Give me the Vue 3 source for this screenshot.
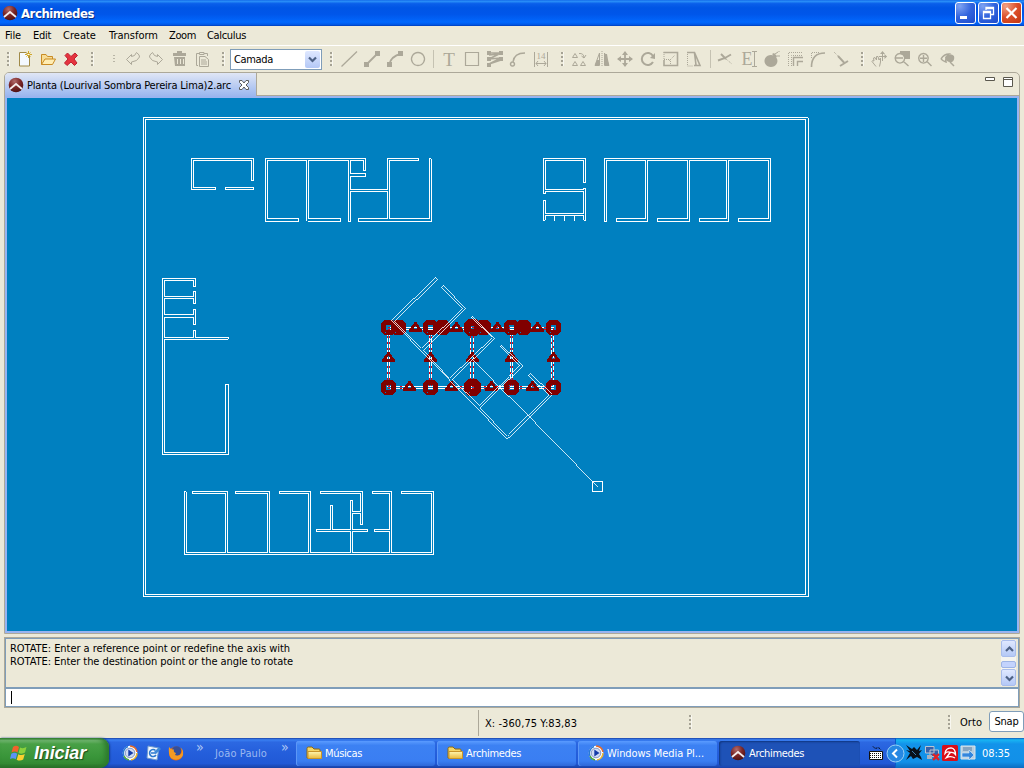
<script setup>
// Spreads or tightens the tracking of a label so that it fills the given width.
const vFit = {
  mounted(el, { value }) {
    const natural = el.getBoundingClientRect().width
    el.style.letterSpacing = (value - natural) / el.textContent.length + 'px'
  }
}

const menus = [
  ['File', 16, 5], ['Edit', 18, 12], ['Create', 33, 12],
  ['Transform', 49, 13], ['Zoom', 27, 11], ['Calculus', 39, 11]
]

const edit = [
  { s: 'M1.500 8.500L6.500 3.500V5.500Q10 5.500 11.500 1.500Q15 4 14.500 6Q12.500 10.500 6.500 11V13.500Z' },
  { s: 'M14.500 8.500L9.500 3.500V5.500Q6 5.500 4.500 1.500Q1 4 1.500 6Q3.500 10.500 9.500 11V13.500Z' },
  { f: 'M2 2H6V0H11V2H15V5H2ZM3 6H14V15H4ZM6 8V13H7V8ZM9 8V13H10V8ZM12 8V13H13V8Z' },
  { s: 'M4 14.5H2.5V2.5H5M10 2.5H13.5V5M5.5 3.5V1.5H10V3.5ZM5.5 5.5H11L14.5 8.5V15.5H5.5ZM7 9H12M7 11H13M7 13H13' }
]
const draw = [
  { s: 'M.5 15.500L16 .5', w: 1.3 },
  { s: 'M2 14L14 2', w: 1.8, f: 'M0 11H5V16H0ZM11 0H16V5H11Z' },
  { s: 'M2 14Q4 5 14 3', w: 1.8, f: 'M0 11H5V16H0ZM11 0H16V5H11Z' },
  { s: 'M8 1.500A6.500 6.500 0 1 1 7.990 1.500Z', w: 1.3 }
]
const shapes = [
  { t: 'T', fs: 19, y: 14.5 },
  { s: 'M1.500 1.500H14.500V14.500H1.500Z', w: 1.2 },
  { s: 'M2 2H14L2 8L14 7L2 13L14 9M2 4L13 3', w: 1.6, f: 'M0 0H4V4H0ZM12 0H16V4H12ZM0 6H4V10H0ZM12 6H16V10H12ZM0 12H4V16H0Z' },
  { s: 'M3 11Q4 2 15 2M2.500 11A2 2 0 1 1 2.490 11Z', w: 1.5 },
  { s: 'M1.5 1V16M14.5 1V16M3 12.500H13M5 10L3 12.500L5 15M11 10L13 12.500L11 15', t: '14', fs: 9, y: 8 }
]
const transform = [
  { s: 'M4 2.500L1.500 6.500H6.500ZM4 10.500L1.500 14.500H6.500ZM12 10.500L9.500 14.500H14.500ZM8 2.500Q13 2 13 7M10.500 5L13 7L15 4' },
  { d: 'M8 0V16', s: 'M5.500 2L1 14.500H5.500ZM10.500 2L15 14.500H10.500Z', f: 'M3 9H5V14H1ZM11 3H13L15 14H11Z' },
  { s: 'M8 1V15M1 8H15', w: 1.8, f: 'M8 0L11 4H5ZM8 16L11 12H5ZM0 8L4 5V11ZM16 8L12 5V11Z' },
  { s: 'M13 11A6 6 0 1 1 13 5', w: 2, f: 'M15 2V8L10 7Z' },
  { d: 'M1 8V1M1 8.500H7.500V15M6 10L12 4', s: 'M.5 1.500H14.500V14.500H1V9', w: 1.6 },
  { d: 'M1.500 1V15H7', s: 'M1 1.500H8.500L14 14.500H8M8.500 2L10 14', w: 1.6 }
]
const modify = [
  { s: 'M0 9.500L7 7L13 3.500M3 3L8 8', w: 1.9, d: 'M8 8L14 13' },
  { t: 'E', fs: 18, y: 13.5, x: 6, s: 'M13.500 1V15M11 .5H16M11 15.500H16' },
  { f: 'M7 4A6.500 6 0 1 1 6.900 4ZM8 3L10 2L13 5L12 7Z', s: 'M11 3L14 1M15 0V1M13 5L16 5' },
  { d: 'M1.500 15V1.500H16M4.500 15V4.500H16', s: 'M6.500 15V6.500H16M10.500 15V10.500H16', w: 1.4 },
  { d: 'M1.500 7V1.500H9', s: 'M1.500 16Q1.500 2 15 2', w: 1.6 },
  { d: 'M1 1L7 7', s: 'M5 5L11 11.500M7 15L15 10', w: 1.9 }
]
const view = [
  { s: 'M5 15.500L1 10.500Q1 9 3 10L2.500 7L4 6.500L5.500 9L5.500 5.500H7L8 9L9.500 7V11L8.500 15.500M11.500 1V10M8 5.500H15.500', f: 'M11.500 0L14 3H9ZM16 5.500L13.500 8V3Z' },
  { s: 'M6 2.500A4.800 4.800 0 1 1 5.900 2.500ZM9.500 10.500L14.500 15M2 7H9', w: 1.4, f: 'M6 0H16V8H11L9 4L6 3Z' },
  { s: 'M6.500 2.500A4.800 4.800 0 1 1 6.400 2.500ZM10 10.500L14.500 15M3 7.300H10M6.500 4V11', w: 1.4 },
  { s: 'M1 8Q4 3 9 3Q5 6 6 11Q3 10 1 8M10 11L14 15', w: 1.5, f: 'M5 6Q10 1 14 5Q15 9 12 11Q6 12 5 6Z' }
]

const walls = [
  // site boundary
  'M143 117H807M808 118V596H143V117M145 119H805V594H145Z',
  // north-west blocks
  'M251 180V160H193V187H215V189H191V158H253V180H251M253 189H225V187H253V189',
  'M306 220V160H267V218H298V221H265V158H365V170H363V160H350V173H365V176H350V189H387V158H418V160H389V218H429V158H430M431 159V221H358V218H387V191H350V221H348V160H308V218H340V221H308',
  // north-east blocks
  'M583 182H585V158H543V193H545V191H583V213H545V200H543V220H544M583 182V160H545V189H583V188H585V220H584M545 219V215H583V219M554 215V220M564 215V220M574 215V220',
  'M604 158H770V221H738V218H768V160H728V221H699V218H726V160H689V221H657V218H687V160H647V221H616V218H645V160H606V221H604Z',
  // west block
  'M195 285V278H162V454H228V384H225V452H164V339H227M228 338V337H195V330H193V337H164V317H193V324H195V309H193V314H164V298H193V303H195V291H193V296H164V280H193V286H195',
  // south block
  'M185 491H184V554H433V491H401V493H431V552H391V491H372V493H389V529H374V531H389V552H352V531H367V529H352V513H360V524H362V491H320V493H360V511H352V500H350V529H332V505H330V529H316V531H350V552H310V491H279V493H308V552H269V491H235V493H267V552H227V491H192V493H225V552H186V492'
]
// floor plan preview at the current rotation angle
const ghost = 'M435 276L391 319L507 438L551 394L529 373L527 375L548 395L507 435L480 407L522 365L501 344L499 346L519 365L478 405L451 379L494 337L472 315L470 317L491 337L449 377L423 349L465 307L443 284L441 286L462 307L421 347L394 320L437 278Z'
const columns = 'M387 329V386M389 329V386M429 329V386M431 329V386M470 329V386M473 329V386M510 329V386M512 329V386M551 329V386M553 327V386'
const rows = 'M387 327H553M387 329H553M387 386H553M387 388H553'

const full = new Set([398, 442, 483, 523])
const grips = []
for (const x of [388, 398, 430, 442, 472, 483, 511, 523, 553]) grips.push([x, 327])
for (const x of [388, 430, 472, 511, 553]) grips.push([x, 387])
const mids = []
for (const x of [415, 456, 497, 537]) mids.push([x, 327])
for (const x of [388, 430, 472, 511, 553]) mids.push([x, 357])
for (const x of [409, 451, 491, 532]) mids.push([x, 386])

const tasks = [
  { label: 'Músicas', w: 37, icon: 'folder' },
  { label: 'Archimedes', w: 55, icon: 'folder' },
  { label: 'Windows Media Pl...', w: 97, icon: 'wmp' },
  { label: 'Archimedes', w: 55, icon: 'arch', on: true }
]
</script>

<template>
  <div class="screen">
    <svg class="defs" width="0" height="0">
      <defs>
        <radialGradient id="red" cx=".4" cy=".25" r=".8"><stop offset="0" stop-color="#b06a6a" /><stop offset=".5" stop-color="#7c2727" /><stop offset="1" stop-color="#4a0f10" /></radialGradient>
        <linearGradient id="fold" x2="0" y2="1"><stop offset="0" stop-color="#fff6b0" /><stop offset="1" stop-color="#e9b93c" /></linearGradient>
        <symbol id="arch" viewBox="0 0 16 16"><circle cx="8" cy="8" r="7.300" fill="url(#red)" /><path d="M2 12L8 7L14 12" fill="none" stroke="#f4ecec" stroke-width="1.800" /></symbol>
        <symbol id="folder" viewBox="0 0 16 16"><path d="M1 3.500Q1 2 2.500 2H6L8 4H13Q14 4 14 5V13H1Z" fill="#f5d667" stroke="#8a6914" /><path d="M2 6.500H15.500V13.500H2Z" fill="url(#fold)" stroke="#c9952a" /></symbol>
        <symbol id="wmp" viewBox="0 0 16 16"><circle cx="8" cy="8" r="7.300" fill="#fff" /><path d="M2 11A7 7 0 0 1 6 1.500" fill="none" stroke="#2779d6" stroke-width="1.500" /><path d="M8 1A7 7 0 0 1 15 7" fill="none" stroke="#e66a27" stroke-width="1.500" /><path d="M15 8A7 7 0 0 1 9 15" fill="none" stroke="#e9b32b" stroke-width="1.500" /><path d="M7 15A7 7 0 0 1 2 11" fill="none" stroke="#4da841" stroke-width="1.500" /><circle cx="8" cy="8" r="4.800" fill="#cfdcf5" stroke="#8496c4" /><path d="M6.300 4.500L11.500 8L6.300 11.500Z" fill="#143ba8" /></symbol>
      </defs>
    </svg>

    <header class="title">
      <svg class="i16"><use href="#arch" /></svg>
      <b v-fit="73">Archimedes</b>
      <div class="winbtns">
        <svg width="21" height="22"><path d="M5 15.500H12" stroke="#fff" stroke-width="3" /></svg>
        <svg width="21" height="22"><path d="M8 8V5.500H15.500V12.500H13M8 6.500H15.500M5.500 9.500H12.500V16.500H5.500ZM5.500 10.500H12.500" fill="none" stroke="#fff" stroke-width="1.300" /></svg>
        <svg class="close" width="21" height="22"><path d="M5.500 6L15.500 16M15.500 6L5.500 16" stroke="#fff" stroke-width="2.200" /></svg>
      </div>
    </header>

    <nav class="menu">
      <span v-for="m in menus" :key="m[0]" :style="{ marginLeft: m[2] + 'px' }" v-fit="m[1]">{{ m[0] }}</span>
    </nav>

    <div class="tools">
      <i class="grip g0" />
      <div class="group m7">
        <svg class="i16" viewBox="0 0 16 16"><path d="M2.500 1.500H9L12.500 5V15H2.500Z" fill="#f4f9ff" stroke="#a08a48" /><path d="M11.500 0V7M8 3.500H15M9.500 1.500L13.500 5.500M13.500 1.500L9.500 5.500" stroke="#d0a72a" /><path d="M10.500 3.500H12.500" stroke="#fff" /></svg>
        <svg class="i16" viewBox="0 0 16 16"><path d="M1.500 13.500V3.500H6L7.500 5.500H12.500V8" fill="#f7dc95" stroke="#c98b23" /><path d="M1.500 13.500L5 8H15.500L12.500 13.500Z" fill="#ffedb3" stroke="#c98b23" /></svg>
        <svg class="i16" viewBox="0 0 16 16"><path d="M4.500 2L8 5.500L12 2L14.500 4.500L11 8L14 12L11.500 14.500L8 11L4 14.500L1.500 12L5 8L2 4.500Z" fill="#e5343f" stroke="#bd2332" /></svg>
      </div>
      <i class="grip m12" />
      <i class="dots" />
      <div class="group m8">
        <svg v-for="(k, n) in edit" :key="n" class="i16 dis" viewBox="0 0 16 16"><path v-if="k.s" :d="k.s" class="ln" /><path v-if="k.f" :d="k.f" class="fl" /></svg>
      </div>
      <i class="grip m12" />
      <div class="combo"><span v-fit="39">Camada</span><svg width="15" height="17"><path d="M4 6.500L7.500 10L11 6.500" fill="none" stroke="#4d6185" stroke-width="2.200" /></svg></div>
      <i class="grip m8" />
      <template v-for="(g, gi) in [draw, shapes, transform, modify, view]" :key="gi">
        <i v-if="gi === 1 || gi === 3" class="sep" :class="{ wide: gi === 3 }" />
        <i v-if="gi === 2 || gi === 4" class="grip m12" />
        <div class="group" :class="gi === 0 ? 'm8' : 'm7'">
          <svg v-for="(k, n) in g" :key="n" class="i16 dis" viewBox="0 0 16 16">
            <path v-if="k.f" :d="k.f" class="fl" />
            <path v-if="k.d" :d="k.d" class="ln dash" />
            <path v-if="k.s" :d="k.s" class="ln" :stroke-width="k.w || 1" />
            <text v-if="k.t" :x="k.x || 8" :y="k.y" :font-size="k.fs" text-anchor="middle">{{ k.t }}</text>
          </svg>
        </div>
      </template>
    </div>

    <section class="editor">
      <div class="tabs">
        <div class="tab">
          <svg class="i16"><use href="#arch" /></svg>
          <span v-fit="204">Planta (Lourival Sombra Pereira Lima)2.arc</span>
          <svg width="12" height="12" viewBox="0 0 12 12"><path d="M1.500 1.500H4L6 4L8 1.500H10.500V3.500L8 6L10.500 8.500V10.500H8L6 8L4 10.500H1.500V8.500L4 6L1.500 3.500Z" fill="#fff" stroke="#5c5c5c" /></svg>
        </div>
        <div class="tabctl">
          <svg width="10" height="5"><path d="M.5 .5H9.500V3.500H.5Z" fill="#fff" stroke="#5a584e" /></svg>
          <svg width="10" height="10"><path d="M.5 .5H9.500V9.500H.5ZM.5 2.500H9.500" fill="#fff" stroke="#5a584e" /></svg>
        </div>
      </div>
      <svg class="canvas" viewBox="7 98 1010 533">
        <g transform="translate(.5 .5)" shape-rendering="crispEdges" fill="none" stroke="#fff" stroke-linecap="square">
          <path v-for="(d, n) in walls" :key="n" :d="d" />
          <g class="sel"><path :d="columns" /><path :d="rows" /></g>
          <path class="selred" :d="columns" />
          <path class="selred far" :d="rows" />
          <path v-for="(p, n) in grips" :key="'g' + n" class="mark" :class="{ full: full.has(p[0]) }" :stroke-width="p[0] === 472 ? 7 : 5" :transform="`translate(${p[0]} ${p[1]})`" d="M-3 -5H3L5 -3V3L3 5H-3L-5 3V-3Z" />
          <path v-for="(p, n) in mids" :key="'m' + n" class="mark" stroke-width="3" stroke-linejoin="round" :transform="`translate(${p[0]} ${p[1]})`" d="M0 -4L-5 3H5Z" />
          <path class="thin" :d="ghost" />
          <path class="thin" d="M472 358L597 486" />
          <path d="M592 481H602V491H592Z" />
        </g>
      </svg>
    </section>

    <section class="console">
      <div class="log">
        <div>
          <p><span v-fit="280">ROTATE: Enter a reference point or redefine the axis with</span></p>
          <p><span v-fit="283">ROTATE: Enter the destination point or the angle to rotate</span></p>
        </div>
        <div class="scroll">
          <svg class="sb" width="15" height="17"><path d="M4 10L7.500 6.500L11 10" fill="none" stroke="#4d6185" stroke-width="2.200" /></svg>
          <i class="thumb" />
          <svg class="sb" width="15" height="17"><path d="M4 6.500L7.500 10L11 6.500" fill="none" stroke="#4d6185" stroke-width="2.200" /></svg>
        </div>
      </div>
      <div class="input"><i /></div>
    </section>

    <footer class="status">
      <i class="rule" />
      <span class="coords" v-fit="92">X: -360,75 Y:83,83</span>
      <i class="grip s1" />
      <i class="grip s2" />
      <span class="orto" v-fit="22">Orto</span>
      <div class="snap"><span v-fit="24">Snap</span></div>
    </footer>

    <div class="taskbar">
      <div class="start">
        <svg width="18" height="18" viewBox="0 0 18 18"><path d="M3 3Q6 .5 9 3L7.500 8.500Q5 6.500 1.500 8.500Z" fill="#f2622c" /><path d="M10 3.500Q13 5 16.500 3L15 8.500Q12 10.500 8.500 9Z" fill="#8bd13c" /><path d="M1.300 9.800Q4.500 7.500 7.200 9.800L5.700 15.200Q3 13.200 0 15Z" fill="#5a93f5" /><path d="M8.300 10.200Q11.500 12 14.800 10L13.200 15.500Q10 17.500 6.700 15.700Z" fill="#fbd02f" /></svg>
        <b v-fit="52">Iniciar</b>
      </div>
      <div class="quick">
        <svg class="i16"><use href="#wmp" /></svg>
        <svg class="i16" viewBox="0 0 16 16"><path d="M3 1L14 3L12 15L2 13Z" fill="#f2f7fd" stroke="#6e9bd0" /><path d="M10.500 5.500A3.500 3.500 0 1 0 11 10M6 8H11" fill="none" stroke="#2b79cf" stroke-width="1.600" /><path d="M9 7L14 2L16 4L11 9Z" fill="#408ad8" /></svg>
        <svg class="i16" viewBox="0 0 16 16"><circle cx="8" cy="8.500" r="7" fill="#e46a16" /><circle cx="8.500" cy="6" r="4.800" fill="#344f9b" /><path d="M1 2Q3 5 6 4.500Q5 7 8 8L7 10Q10 12 13 9Q15 6 12.500 2Q17 7 14 12Q9 17 3 13Q0 9 1 2Z" fill="#f49a22" /></svg>
      </div>
      <span class="chev">»</span>
      <span class="user" v-fit="52">João Paulo</span>
      <span class="chev c2">»</span>
      <div class="tasks">
        <div v-for="(t, n) in tasks" :key="n" class="task" :class="{ on: t.on }">
          <svg class="i16"><use :href="'#' + t.icon" /></svg>
          <span v-fit="t.w">{{ t.label }}</span>
        </div>
      </div>
      <svg class="kbd" width="14" height="14" viewBox="0 0 14 14"><path d="M4 .5Q6 3 8 2T12 4" fill="none" stroke="#000" stroke-dasharray="2 1" /><path d="M.5 5.500H13.500V13.500H.5Z" fill="#fff" stroke="#111" /><path d="M1 7.500H13M1 9.500H13M1 11.500H13" stroke="#111" stroke-dasharray="1 1" /></svg>
      <div class="tray">
        <svg class="collapse" width="19" height="19" viewBox="0 0 19 19"><circle cx="9.500" cy="9.500" r="8.500" fill="#2788e3" stroke="#9bd1f5" /><path d="M11 5.500L7 9.500L11 13.500" fill="none" stroke="#fff" stroke-width="2" /></svg>
        <svg class="i16" viewBox="0 0 16 16"><path d="M0 0L6 4L8 2L11 5L15 0L13 6L16 5L13 9L15 12L16 15L11 12L7 14L5 11L0 15L4 8L0 5L4 6Z" fill="#091019" /><path d="M6 6L10 10" stroke="#397cae" /></svg>
        <svg class="i16" viewBox="0 0 16 16"><path d="M1.500 1.500H10V8H1.500ZM6 5H14.500V11.500H6Z" fill="#3861a9" stroke="#bbc4cf" /><path d="M3 10H8V14H3Z" fill="#a9b2c0" /><path d="M9 9L15 15M15 9L9 15" stroke="#e32124" stroke-width="2.400" /></svg>
        <svg class="i16" viewBox="0 0 16 16"><rect width="16" height="16" rx="1.500" fill="#d90f18" /><path d="M3 8.500Q3.500 3 9 2.800Q13.500 3.500 13.500 9.500Q11.500 6.800 8.500 7.500Q5 6 3 8.500Z" fill="none" stroke="#fff" stroke-width="1.300" /><path d="M8.500 7L4.500 12.500Q9 10.500 13 13" fill="none" stroke="#fff" stroke-width="1.400" /></svg>
        <svg class="i16" viewBox="0 0 16 16"><path d="M1 1H15V14H1Z" fill="#b7cddd" stroke="#d8e4ec" /><path d="M3 3H12M3 5H12" stroke="#547da4" /><path d="M2 8H9V5L14 10L9 15V12H2Z" fill="#3486dc" stroke="#d8efff" stroke-width=".6" /></svg>
        <span class="clock" v-fit="28">08:35</span>
      </div>
    </div>
  </div>
</template>

<style>
body { margin: 0; overflow: hidden; }
</style>

<style scoped>
.screen { width: 1024px; height: 768px; display: flex; flex-direction: column; background: #ece9d8; font: 11px/13px "DejaVu Sans Condensed", "DejaVu Sans", sans-serif; color: #000; overflow: hidden; }
.screen * { box-sizing: border-box; flex-shrink: 0; }
.screen span, .screen b { white-space: pre; display: inline-block; }
.defs { position: absolute; }
.i16 { width: 16px; height: 16px; display: block; overflow: visible; }
.title { height: 26px; display: flex; align-items: center; padding: 0 2px; background: linear-gradient(#1268e8 0, #2a8ff8 5%, #0a5fea 14%, #0055e5 30%, #0056ea 55%, #0168fe 85%, #0059e8 94%, #003dbb); }
.title b { color: #fff; font-size: 13px; line-height: 16px; margin: 1px 0 0 3px; text-shadow: 1px 1px #0b2f86; }
.winbtns { margin-left: auto; display: flex; gap: 2px; }
.winbtns svg { border: 1px solid #fff; border-radius: 3px; background: radial-gradient(circle at 20% 15%, #7fa3f2, #3264de 50%, #1d4bcb); }
.winbtns svg path { transform: translate(-1px, -1px); }
.winbtns .close { background: radial-gradient(circle at 20% 15%, #f0a286, #dc4f2a 50%, #c03510); }
.menu { height: 20px; display: flex; align-items: center; border-bottom: 1px solid #fff; padding-bottom: 1px; }
.tools { height: 26px; display: flex; align-items: center; }
.grip { width: 3px; height: 14px; background: repeating-linear-gradient(#a5a294 0 2px, transparent 2px 4px); border-right: 1px solid #f8f7f0; }
.g0 { margin-left: 7px; }
.m7 { margin-left: 7px; }
.m8 { margin-left: 8px; }
.m12 { margin-left: 12px; }
.group { display: flex; gap: 7px; }
.dots { width: 2px; height: 8px; margin-left: 19px; background: repeating-linear-gradient(#b8b5a6 0 1px, transparent 1px 3px); }
.dots + .group { margin-left: 10px; }
.dis .fl { fill: #aca899; }
.dis .ln { fill: none; stroke: #aca899; }
.dis .dash { stroke-dasharray: 1 1; }
.dis text { fill: #aca899; font-family: "Liberation Serif", serif; }
.combo { width: 92px; height: 21px; margin-left: 5px; padding: 1px 1px 1px 3px; border: 1px solid #7f9db9; background: #fff; display: flex; align-items: center; justify-content: space-between; }
.combo svg, .sb { background: linear-gradient(#dfe8ff, #b4c8f6); border-radius: 2px; }
.sep { width: 1px; height: 18px; margin-left: 7px; background: #c5c2b2; }
.wide { margin-left: 8px; }
.editor { height: 562px; margin: 0 4px; width: 1016px; border: 1px solid #aca899; border-radius: 5px 5px 0 0; display: flex; flex-direction: column; }
.tabs { height: 23px; display: flex; justify-content: space-between; border-bottom: 1px solid #aca899; }
.tab { width: 252px; height: 24px; padding-left: 3px; display: flex; align-items: center; background: linear-gradient(#e0e6f5, #a2bcf0 85%, #99b4ec); border-right: 1px solid #aca899; border-radius: 4px 0 0 0; }
.tab span { margin: 0 7px 0 3px; }
.tabctl { display: flex; gap: 8px; padding: 4px 6px 0 0; }
.editor .canvas { display: block; box-sizing: content-box; width: 1010px; height: 533px; background: #0080c0; border: 2px solid #99b4f0; }
.sel path { stroke-linecap: butt; }
.selred { stroke: #e80010; stroke-dasharray: 2 4; stroke-linecap: butt; }
.far { stroke-dasharray: 2 10; }
.thin { stroke-width: .8; stroke-linecap: butt; }
.mark { stroke: #800000; stroke-linecap: butt; }
.full { fill: #800000; }
.console { margin: 3px 4px 0; width: 1016px; height: 71px; border: 1px solid #aca899; display: flex; flex-direction: column; }
.log { height: 50px; border: 1px solid #7f9db9; display: flex; justify-content: space-between; padding: 1px 2px 0 4px; }
.log p { margin: 0; height: 13px; }
.log p:first-child { margin-top: 2px; }
.scroll { width: 15px; display: flex; flex-direction: column; align-items: center; height: 46px; background: #f5f4ef; }
.sb { border: 1px solid #a9bdec; }
.thumb { width: 15px; height: 7px; margin: 4px 0 1px; border-radius: 2px; background: #c3d3fd; border: 1px solid #9db4e5; }
.input { flex: 1; background: #fff; border: 1px solid #7f9db9; padding: 2px 5px; }
.input i { display: block; width: 1px; height: 13px; background: #000; }
.status { height: 30px; display: flex; align-items: center; }
.rule { margin-left: 478px; width: 1px; height: 26px; background: #aca899; }
.coords { margin-left: 6px; }
.status .grip { margin-top: -3px; }
.s1 { margin-left: 112px; }
.s2 { margin-left: 256px; }
.orto { margin-left: 9px; margin-top: -1px; }
.snap { margin: -3px 0 0 7px; width: 35px; height: 21px; background: #fff; border: 1px solid #7f9db9; border-radius: 3px; display: flex; align-items: center; justify-content: center; }
.taskbar { height: 30px; display: flex; align-items: center; background: linear-gradient(#1941a5 0, #3a80f2 6%, #2c68e2 14%, #245edb 50%, #2159d6 85%, #1941a5); color: #fff; }
.start { width: 109px; height: 30px; border-radius: 0 9px 9px 0; display: flex; align-items: center; padding-left: 10px; background: linear-gradient(#2f7d2e 0, #74b873 8%, #48a046 20%, #3a963a 60%, #348b34 85%, #256a25); box-shadow: inset -4px 0 5px #2d7a2d, 1px 0 2px #153a8c; }
.start b { font: italic bold 18px/22px "Liberation Sans", sans-serif; margin-left: 6px; text-shadow: 1px 1px 1px #1d4d1d; }
.quick { display: flex; gap: 7px; margin-left: 13px; }
.chev { width: 10px; margin: -12px 0 0 12px; font-size: 14px; color: #b0c8f5; }
.user { margin-left: 9px; color: #9ab8f0; }
.c2 { margin-left: 14px; }
.tasks { display: flex; gap: 2px; margin-left: 5px; }
.task { width: 139px; height: 25px; display: flex; align-items: center; gap: 3px; padding-left: 10px; border-radius: 3px; background: linear-gradient(#5a9bff, #3c81f3 18%, #3a7ef2 80%, #2f68d8); box-shadow: inset 1px 0 #5c97f7; }
.task.on { width: 141px; padding-left: 11px; background: #1e52b7; box-shadow: inset 1px 1px 2px #10357f; }
.kbd { margin-left: auto; margin-right: 12px; }
.tray { width: 129px; height: 30px; display: flex; align-items: center; gap: 2px; background: linear-gradient(#0c59b9 0, #18b5f3 6%, #1293ea 20%, #1290e8 80%, #0d6cc0); border-left: 1px solid #095bc9; }
.collapse { margin-left: -10px; }
.collapse + .i16 { margin-left: -1px; }
.clock { margin-left: 4px; }
</style>
